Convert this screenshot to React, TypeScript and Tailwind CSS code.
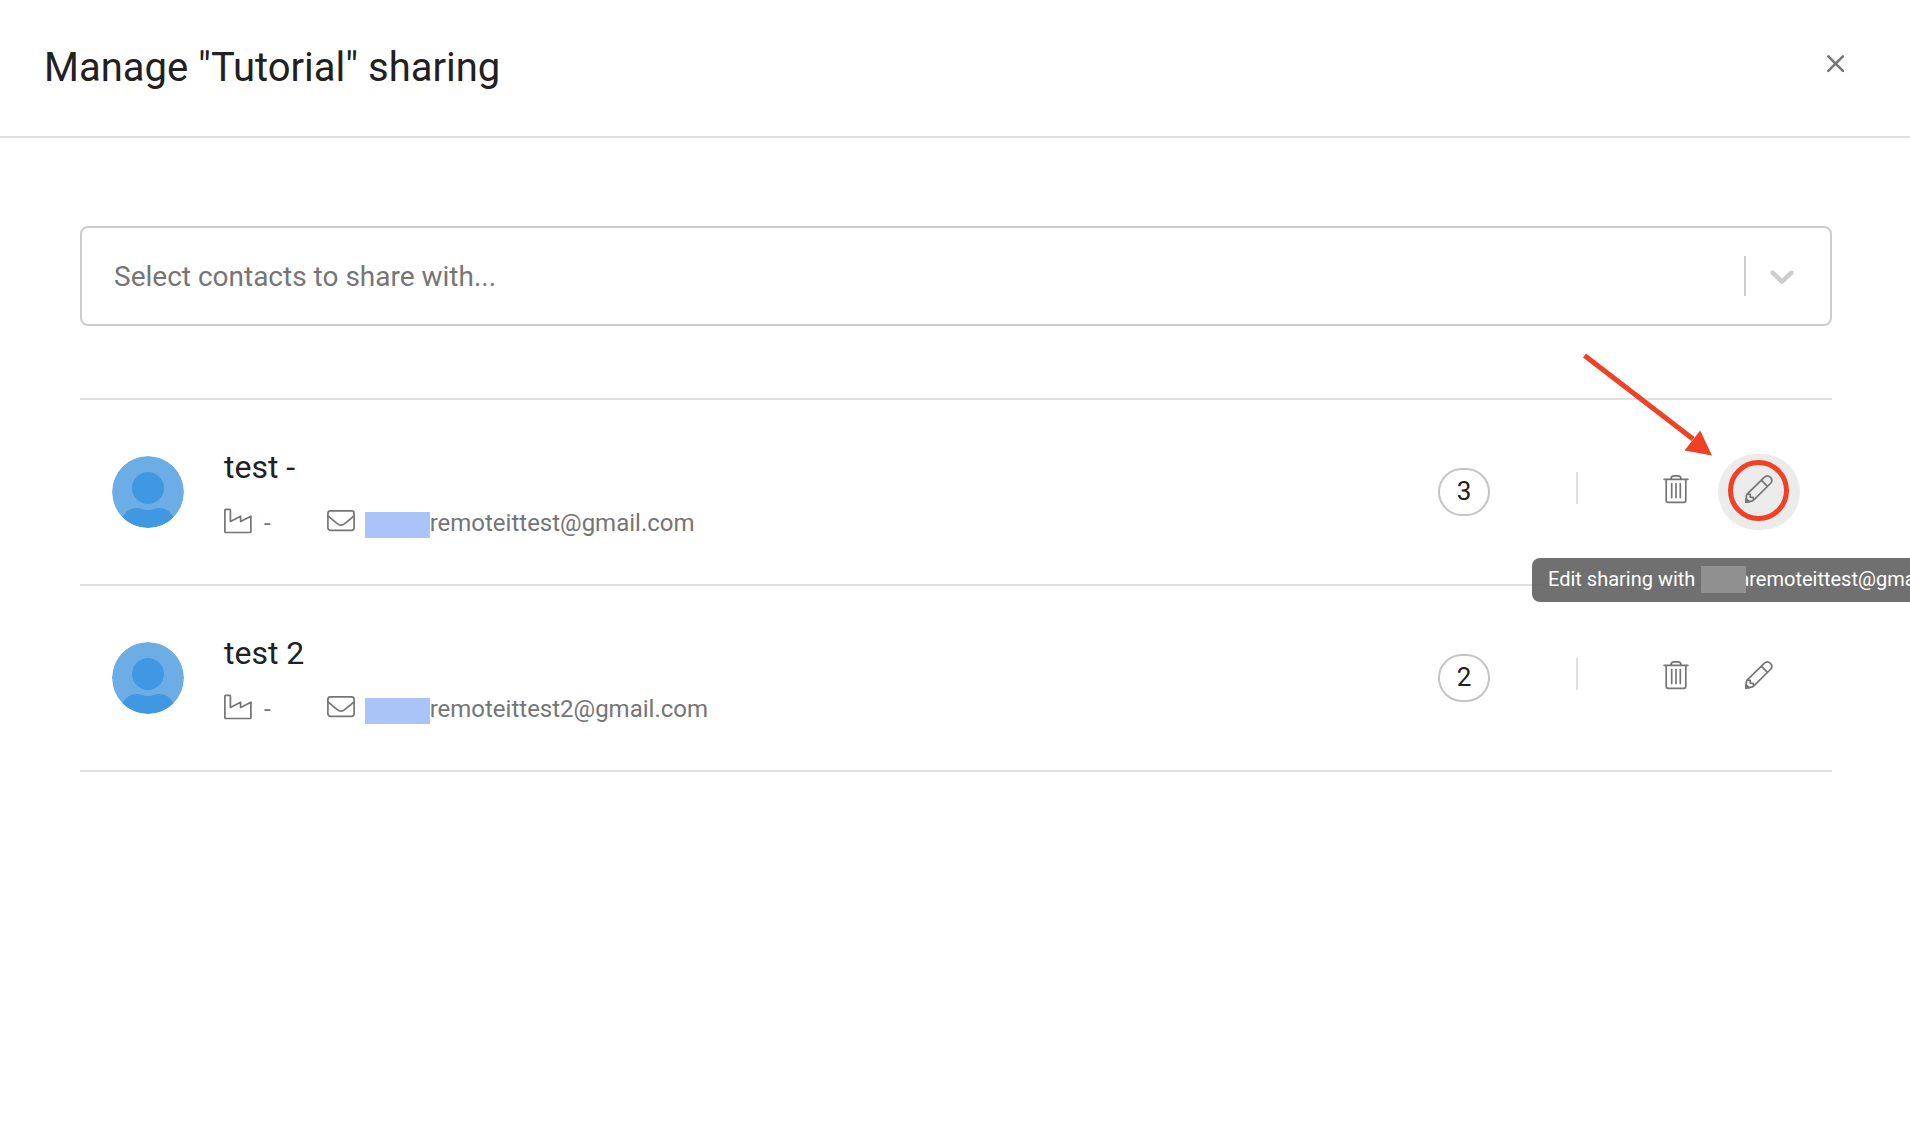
import React from 'react';

type Contact = { name: string; company: string; email: string; services: number; active?: boolean };

const contacts: Contact[] = [
  { name: 'test -', company: '-', email: 'remoteittest@gmail.com', services: 3, active: true },
  { name: 'test 2', company: '-', email: 'remoteittest2@gmail.com', services: 2 },
];

function CloseIcon() {
  return (
    <svg width="20" height="20" viewBox="0 0 20 20" fill="none" stroke="#757575" strokeWidth="2.6" strokeLinecap="round" aria-hidden="true">
      <path d="M2.300 2.300 16.900 16.900M16.900 2.300 2.300 16.900" />
    </svg>
  );
}

function ChevronIcon() {
  return (
    <svg width="40" height="40" viewBox="0 0 20 20" fill="#cccccc" aria-hidden="true">
      <path d="M4.516 7.548c0.436-0.446 1.043-0.481 1.576 0l3.908 3.747 3.908-3.747c0.533-0.481 1.141-0.446 1.574 0 0.436 0.445 0.408 1.197 0 1.615-0.406 0.418-4.695 4.502-4.695 4.502-0.217 0.223-0.502 0.335-0.787 0.335s-0.57-0.112-0.789-0.335c0 0-4.287-4.084-4.695-4.502s-0.436-1.17 0-1.615z" />
    </svg>
  );
}

function AvatarIcon() {
  return (
    <svg className="size-18 shrink-0 rounded-full" viewBox="0 0 72 72" aria-hidden="true">
      <circle cx="36" cy="36" r="36" fill="#6dade6" />
      <circle cx="36" cy="32" r="16" fill="#4097e2" />
      <path d="M10.5 61.4C14 55.5 18 52 24.500 52C29.500 52 30.500 54 36 54C41.500 54 42.500 52 47.500 52C54 52 58 55.500 61.500 61.400A36 36 0 0 1 10.500 61.400Z" fill="#4097e2" />
    </svg>
  );
}

function FactoryIcon() {
  return (
    <svg width="28" height="26" viewBox="0 0 28 26" fill="none" stroke="#757575" strokeWidth="1.7" strokeLinejoin="round" aria-hidden="true">
      <path d="M.9 2Q.9 1.300 1.600 1.300H5.700Q6.400 1.300 6.400 2V13.400L16.600 8.200V13.400L26.900 8.200V23.800Q26.900 24.500 26.200 24.500H1.600Q.9 24.500 .9 23.800Z" />
    </svg>
  );
}

function MailIcon() {
  return (
    <svg width="28" height="26" viewBox="0 0 28 26" fill="none" stroke="#757575" strokeWidth="1.7" strokeLinejoin="round" aria-hidden="true">
      <rect x=".9" y="2.900" width="26.200" height="19.400" rx="2.600" />
      <path d="M1 7.900C4 10.600 7.500 13.400 10.300 15.600C12.800 17.600 15.200 17.600 17.700 15.600C20.500 13.400 24 10.600 27 7.900" />
    </svg>
  );
}

function TrashIcon() {
  return (
    <svg width="28" height="34" viewBox="0 0 28 34" fill="none" stroke="#757575" strokeWidth="1.7" strokeLinecap="round" aria-hidden="true">
      <path d="M1.100 4.300H24.900M3.200 4.300V25.200Q3.200 27.300 5.300 27.300H20.700Q22.800 27.300 22.800 25.200V4.300M7.900 4.100C8 1.900 9 .9 11.100 .9H14.900C17 .9 18 1.900 18.100 4.100M8.700 8.600V22.600M13 8.600V22.600M17.300 8.600V22.600" />
    </svg>
  );
}

function PencilIcon() {
  return (
    <svg width="28" height="34" viewBox="0 0 28 34" fill="none" stroke="#757575" strokeWidth="1.700" strokeLinejoin="round" strokeLinecap="round" aria-hidden="true">
      <path d="M2.300 18.900 19.200 2.400C21.100 .700 23.600 .700 25.400 2.400C27.200 4.200 27.200 6.600 25.400 8.500L8.600 25.200Q7.800 26 6.700 26.200L.9 27.200 1.400 20.900Q1.500 19.700 2.300 18.900ZM16.300 5.200 22.500 11.300M2.300 18.900 5.300 19.400 5.200 22.200 8.200 22.300 8.600 25.200" />
      <path d="M1.200 23.800 4.200 26.700 .9 27.200Z" fill="#757575" />
    </svg>
  );
}

function Pointer() {
  return (
    <>
      <svg className="pointer-events-none absolute right-[87px] bottom-[73px]" width="132" height="104" viewBox="0 0 132 104" aria-hidden="true">
        <path d="M3.500 2.500 112 86" stroke="#ee4125" strokeWidth="5" />
        <path d="M131 102.500 103.500 97.500 119.200 77.500Z" fill="#ee4125" />
      </svg>
      <span className="pointer-events-none absolute top-1.5 left-2.5 size-[61px] rounded-full border-[5px] border-[#ee4125]" />
    </>
  );
}

function Tooltip() {
  return (
    <div role="tooltip" className="absolute top-[104px] -left-[186px] z-10 flex h-11 items-center rounded-lg bg-[#616161]/90 px-4 pb-0.5 text-xl whitespace-nowrap text-white">
      <span>Edit sharing with</span>
      <span className="relative z-10 ml-1.5 h-[27px] w-[45px] bg-[#909090]" />
      <span className="-ml-2">aremoteittest@gmail.com</span>
    </div>
  );
}

function ContactRow({ contact }: { contact: Contact }) {
  return (
    <li className="flex h-[186px] items-center border-b-2 border-[#e0e0e0] px-8">
      <AvatarIcon />
      <div className="ml-10 flex-1 pt-1">
        <h2 className="text-[32px] leading-12 text-[#212121]">{contact.name}</h2>
        <div className="mt-1.5 flex h-12 items-center text-2xl text-[#757575]">
          <FactoryIcon />
          <span className="mt-1 ml-3">{contact.company}</span>
          <span className="ml-14 flex items-center">
            <MailIcon />
            <span className="mt-2 ml-2.5 h-[26px] w-[65px] bg-[#abc4f8]" />
            <span className="mt-1">{contact.email}</span>
          </span>
        </div>
      </div>
      <span className="flex h-12 w-[52px] items-center justify-center rounded-full border-2 border-[#c4c4c4] pb-0.5 text-[26px] text-[#212121]">
        {contact.services}
      </span>
      <span className="mr-[58px] mb-2 ml-[86px] h-8 w-0.5 bg-[#e0e0e0]" />
      <button type="button" aria-label={`Remove ${contact.name}`} className="flex h-[76px] w-[82px] items-center justify-center rounded-full">
        <TrashIcon />
      </button>
      <div className="relative">
        <button
          type="button"
          aria-label={`Edit sharing with ${contact.name}`}
          className={contact.active ? 'flex h-[76px] w-[82px] items-center justify-center rounded-full bg-[#ebebeb]' : 'flex h-[76px] w-[82px] items-center justify-center rounded-full'}
        >
          <PencilIcon />
        </button>
        {contact.active && <Pointer />}
        {contact.active && <Tooltip />}
      </div>
    </li>
  );
}

export default function App() {
  return (
    <div className="min-h-screen overflow-hidden bg-white font-['Roboto',sans-serif]">
      <header className="flex h-[138px] items-center justify-between border-b-2 border-[#e0e0e0] pr-16 pl-11">
        <h1 className="text-[40px] leading-16 text-[#212121]">Manage "Tutorial" sharing</h1>
        <button type="button" aria-label="Close" className="mb-2 flex size-5 items-center justify-center">
          <CloseIcon />
        </button>
      </header>
      <main className="pt-22 pr-[78px] pl-20">
        <div className="relative">
          <select
            aria-label="Contacts"
            defaultValue=""
            className="h-25 w-full appearance-none rounded-lg border-2 border-[#cccccc] bg-white px-8 pt-0.5 text-[28px] text-[#757575]"
          >
            <option value="">Select contacts to share with...</option>
            {contacts.map((c) => (
              <option key={c.email} value={c.email}>{c.name}</option>
            ))}
          </select>
          <div className="pointer-events-none absolute inset-y-0 right-[30px] flex items-center gap-4">
            <span className="h-10 w-0.5 bg-[#cccccc]" />
            <ChevronIcon />
          </div>
        </div>
        <ul className="mt-18 border-t-2 border-[#e0e0e0]">
          {contacts.map((c) => (
            <ContactRow key={c.email} contact={c} />
          ))}
        </ul>
      </main>
    </div>
  );
}
